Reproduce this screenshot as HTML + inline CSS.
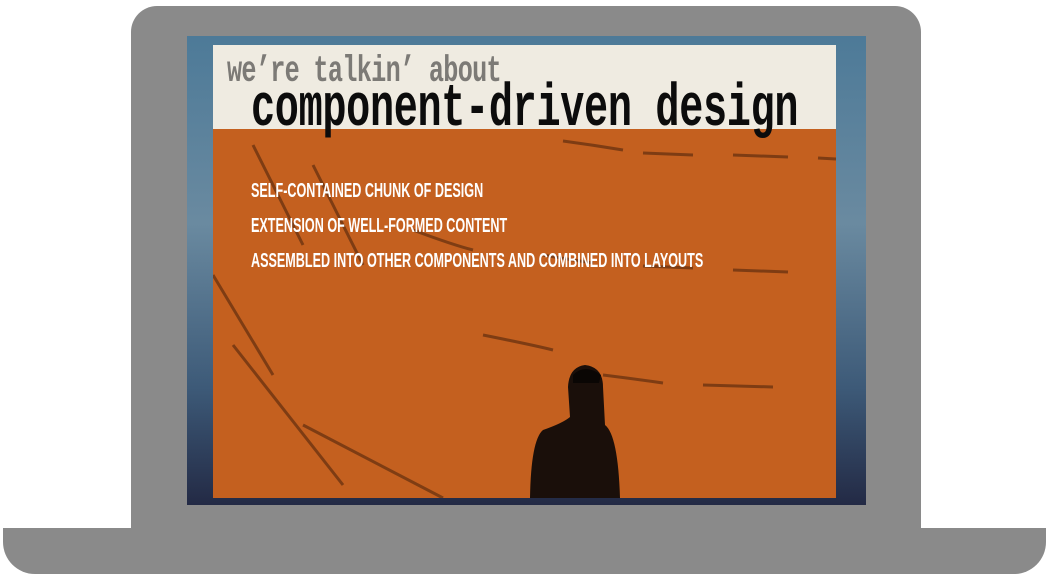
<!DOCTYPE html>
<html><head><style>
html,body{margin:0;padding:0;background:#fff;width:1050px;height:580px;overflow:hidden;position:relative}
.body{position:absolute;left:131px;top:6px;width:790px;height:530px;background:#8a8a8a;border-radius:26px 26px 0 0}
.base{position:absolute;left:3px;top:528px;width:1043px;height:46px;background:#8a8a8a;border-radius:0 0 32px 32px}
.screen{position:absolute;left:187px;top:36px;width:679px;height:469px;background:linear-gradient(180deg,#4d7a98 0%,#6a8aa0 40%,#3d5a78 75%,#232a45 100%)}
.slide{position:absolute;left:213px;top:45px;width:623px;height:453px;background:#c4601f;overflow:hidden}
.cream{position:absolute;left:0;top:0;width:623px;height:84px;background:#efebe1}
.t1{position:absolute;left:14px;top:6px;font:bold 37px "Liberation Mono",monospace;color:#7c7a76;transform:scaleX(.68);transform-origin:0 0;white-space:nowrap;letter-spacing:-1px}
.t2{position:absolute;left:38px;top:31px;font:bold 60px "Liberation Mono",monospace;color:#0c0c0c;transform:scaleX(.67);transform-origin:0 0;white-space:nowrap;letter-spacing:-0.5px}
.b{position:absolute;left:38px;font:bold 20px "Liberation Sans",sans-serif;color:#fff;transform:scaleX(.63);transform-origin:0 0;white-space:nowrap}
</style></head><body>
<div class="body"></div>
<div class="base"></div>
<div class="screen"></div>
<div class="slide">
<svg width="623" height="453" style="position:absolute;left:0;top:0">
<g stroke="#3a1a08" stroke-width="3" fill="none" opacity=".5">
<path d="M350 96 Q380 100 410 105"/><path d="M430 108 L480 110"/><path d="M520 110 L575 112"/><path d="M605 113 L623 114"/>
<path d="M200 185 Q240 200 260 205"/><path d="M330 210 Q360 215 380 218"/><path d="M430 221 L480 223"/><path d="M520 225 L575 227"/>
<path d="M40 100 L90 200"/><path d="M100 120 L150 220"/><path d="M0 230 L60 330"/><path d="M20 300 L130 440"/><path d="M90 380 L230 453"/>
<path d="M270 290 Q320 300 340 305"/><path d="M390 330 Q430 335 450 338"/><path d="M490 340 L560 342"/>
</g>
<path d="M355 342 Q356 322 372 320 Q390 322 390 342 L392 380 Q405 390 407 453 L317 453 Q318 395 330 385 Q350 378 357 372 Z" fill="#1a0f0a"/>
<path d="M360 330 Q372 318 388 330 L386 338 L360 338 Z" fill="#0a0604"/>
</svg>
<div class="cream"></div>
<div class="t1">we’re talkin’ about</div>
<div class="t2">component-driven design</div>
<div class="b" style="top:135px">SELF-CONTAINED CHUNK OF DESIGN</div>
<div class="b" style="top:170px">EXTENSION OF WELL-FORMED CONTENT</div>
<div class="b" style="top:205px">ASSEMBLED INTO OTHER COMPONENTS AND COMBINED INTO LAYOUTS</div>
</div>
</body></html>
